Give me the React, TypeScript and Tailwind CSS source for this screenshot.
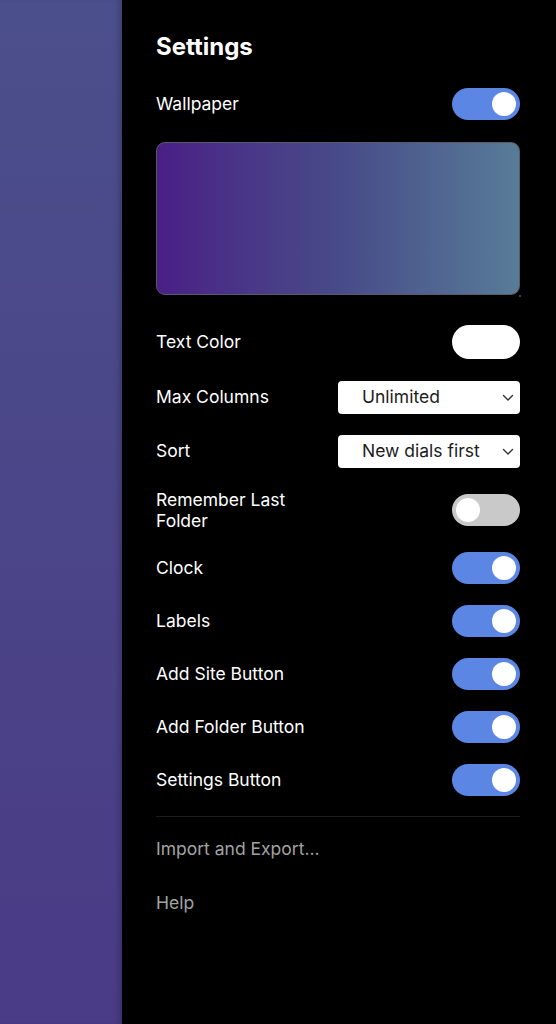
import { useState } from "react";

type ToggleProps = { on: boolean; onChange: () => void };

function Toggle({ on, onChange }: ToggleProps) {
  return (
    <button
      onClick={onChange}
      className={`flex h-[32px] w-[68px] shrink-0 items-center rounded-full px-[4px] ${
        on ? "justify-end bg-[#5b86e4]" : "justify-start bg-[#c9c9c9]"
      }`}
    >
      <span className="block h-[24px] w-[24px] rounded-full bg-white" />
    </button>
  );
}

function Select({ value }: { value: string }) {
  return (
    <div className="flex h-[33px] w-[182px] items-center justify-between rounded-[4px] bg-white pl-[24px] pr-[6px] text-[17.5px] text-[#1c1c1c]">
      <span>{value}</span>
      <svg width="12" height="8" viewBox="0 0 12 8" fill="none">
        <path d="M1.5 1.5 6 6l4.5-4.5" stroke="#333" strokeWidth="1.4" strokeLinecap="round" strokeLinejoin="round" />
      </svg>
    </div>
  );
}

export default function App() {
  const [toggles, setToggles] = useState({
    wallpaper: true,
    remember: false,
    clock: true,
    labels: true,
    addSite: true,
    addFolder: true,
    settingsBtn: true,
  });

  const flip = (k: keyof typeof toggles) =>
    setToggles((t) => ({ ...t, [k]: !t[k] }));

  const lower: { key: keyof typeof toggles; label: string }[] = [
    { key: "clock", label: "Clock" },
    { key: "labels", label: "Labels" },
    { key: "addSite", label: "Add Site Button" },
    { key: "addFolder", label: "Add Folder Button" },
    { key: "settingsBtn", label: "Settings Button" },
  ];

  return (
    <div
      className="flex h-[1024px] w-[556px] overflow-hidden"
      style={{ fontFamily: "Inter, 'Liberation Sans', sans-serif" }}
    >
      {/* wallpaper behind the panel */}
      <div className="h-full w-[122px] shrink-0 bg-gradient-to-b from-[#4b4f8b] to-[#4a3b86] shadow-[inset_-6px_0_6px_-4px_rgba(0,0,0,0.25)]" />

      {/* settings panel */}
      <div className="flex h-full flex-1 flex-col bg-black pl-[34px] pr-[36px] pt-[32px] text-[17.5px] text-white">
        <h1 className="text-[24px] font-bold leading-[30px]">Settings</h1>

        <div className="mt-[26px] flex h-[32px] items-center justify-between">
          <span>Wallpaper</span>
          <Toggle on={toggles.wallpaper} onChange={() => flip("wallpaper")} />
        </div>

        <div className="relative mt-[22px]">
          <div className="h-[153px] w-full rounded-[9px] border border-[#5a5a6a] bg-gradient-to-r from-[#4a1e86] via-[#474a88] to-[#587c98]" />
          <span className="absolute -bottom-[2px] -right-[1px] h-[2px] w-[2px] rounded-full bg-[#555]" />
        </div>

        <div className="mt-[30px] flex h-[34px] items-center justify-between">
          <span>Text Color</span>
          <div className="h-[34px] w-[68px] rounded-full bg-white" />
        </div>

        <div className="mt-[22px] flex h-[33px] items-center justify-between">
          <span>Max Columns</span>
          <Select value="Unlimited" />
        </div>

        <div className="mt-[21px] flex h-[33px] items-center justify-between">
          <span>Sort</span>
          <Select value="New dials first" />
        </div>

        <div className="mt-[21px] flex h-[42px] items-center justify-between">
          <span className="w-[150px] leading-[21px]">Remember Last Folder</span>
          <Toggle on={toggles.remember} onChange={() => flip("remember")} />
        </div>

        <div className="mt-[21px] flex flex-col gap-[21px]">
          {lower.map((row) => (
            <div key={row.key} className="flex h-[32px] items-center justify-between">
              <span>{row.label}</span>
              <Toggle on={toggles[row.key]} onChange={() => flip(row.key)} />
            </div>
          ))}
        </div>

        <div className="mt-[20px] h-px bg-[#1c1c1c]" />

        <div className="mt-[20px] leading-[24px] text-[#a3a3a3]">Import and Export...</div>
        <div className="mt-[30px] leading-[24px] text-[#a3a3a3]">Help</div>
      </div>
    </div>
  );
}
